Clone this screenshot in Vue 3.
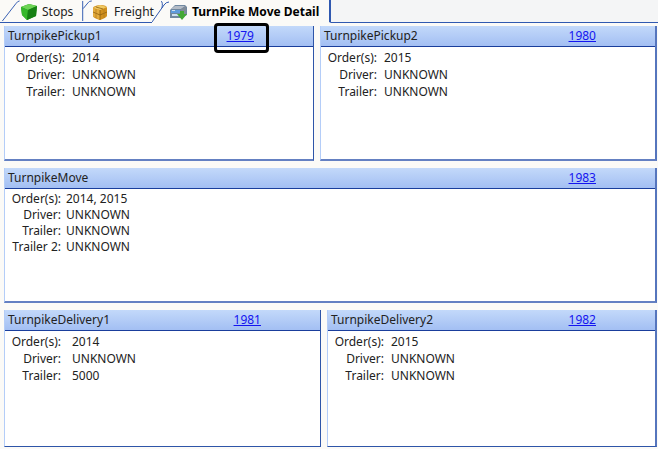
<script setup>
const rows = [
  {
    kind: 'pickup',
    panels: [
      { title: 'TurnpikePickup1', move: '1979', marked: true, fields: [['Order(s):', '2014'], ['Driver:', 'UNKNOWN'], ['Trailer:', 'UNKNOWN']] },
      { title: 'TurnpikePickup2', move: '1980', fields: [['Order(s):', '2015'], ['Driver:', 'UNKNOWN'], ['Trailer:', 'UNKNOWN']] },
    ],
  },
  {
    kind: 'move',
    panels: [
      { title: 'TurnpikeMove', move: '1983', fields: [['Order(s):', '2014, 2015'], ['Driver:', 'UNKNOWN'], ['Trailer:', 'UNKNOWN'], ['Trailer 2:', 'UNKNOWN']] },
    ],
  },
  {
    kind: 'delivery',
    panels: [
      { title: 'TurnpikeDelivery1', move: '1981', fields: [['Order(s):', '2014'], ['Driver:', 'UNKNOWN'], ['Trailer:', '5000']] },
      { title: 'TurnpikeDelivery2', move: '1982', fields: [['Order(s):', '2015'], ['Driver:', 'UNKNOWN'], ['Trailer:', 'UNKNOWN']] },
    ],
  },
]
</script>

<template>
  <main class="page">
    <nav class="tabs" role="tablist">
      <svg class="slope first" viewBox="0 0 20 23" aria-hidden="true">
        <path class="edge" d="M2 22 L16 4 Q18 1 20 1" />
      </svg>
      <button class="tab stops" role="tab" aria-selected="false">
        <svg class="icon" viewBox="0 0 18 18" aria-hidden="true">
          <path d="M1 4 L9 1 L17 3 L16 13 L7 17 L2 12 Z" fill="#1f9a1c" />
          <path d="M1 4 L9 1 L17 3 L8 7 Z" fill="#6ed455" />
          <path d="M1 4 L8 7 L7 17 L2 12 Z" fill="#36b82b" />
          <path d="M8 7 L17 3 L16 13 L7 17 Z" fill="#168013" />
        </svg>
        <span>Stops</span>
      </button>
      <svg class="slope" viewBox="0 0 10 23" aria-hidden="true">
        <path class="edge" d="M0.5 22 V1 M1 9 L6 3 Q7 1 10 1" />
      </svg>
      <button class="tab freight" role="tab" aria-selected="false">
        <svg class="icon small" viewBox="0 0 16 16" aria-hidden="true">
          <path d="M1 4 Q1 2 8 1 Q15 1 15 4 V12 Q14 14 8 16 Q1 14 1 12 Z" fill="#d0901f" />
          <path d="M1 4 L8 1 L15 3 L8 6 Z" fill="#f0c962" />
          <path d="M1 4 L8 6 V16 L1 12 Z" fill="#e3ab3c" />
          <path d="M1 8 L8 11 L15 8 M8 6 V16 M4 3 L11 5" stroke="#8d6010" stroke-width="0.8" fill="none" />
          <path d="M4 5 V14 M12 5 V14" stroke="#b57d1c" stroke-width="0.8" fill="none" />
        </svg>
        <span>Freight</span>
      </button>
      <svg class="slope last" viewBox="0 0 18 23" aria-hidden="true">
        <path class="edge" d="M0 22 L12 5 Q14 2 17 2 M9 1 Q11 2 10 8" />
      </svg>
      <button class="tab current" role="tab" aria-selected="true">
        <svg class="icon" viewBox="0 0 18 18" aria-hidden="true">
          <path d="M0 7 L5 2 H15 L17 4 V12 L11 15 H0 Z" fill="#7088a0" />
          <path d="M1 6 L5 3 H15 L11 6 Z" fill="#b4bcc6" />
          <path d="M1 7 H10 V10 H1 Z" fill="#5e9bdc" />
          <path d="M2 11 H9 V13 H2 Z M2 7 H5 V8 H2 Z" fill="#cfe0f0" />
          <path d="M11 6 L16 3 V12 L11 14 Z" fill="#808b98" />
          <path d="M10 8 H14 V11 H17 L12 17 L7 11 H10 Z" fill="#43a835" />
        </svg>
        <span>TurnPike Move Detail</span>
      </button>
      <div class="rest"></div>
    </nav>

    <div v-for="row in rows" :key="row.kind" class="row" :class="row.kind">
      <section v-for="panel in row.panels" :key="panel.title" class="panel">
        <header class="head">
          <h2>{{ panel.title }}</h2>
          <a :class="{ marked: panel.marked }" href="#">{{ panel.move }}</a>
        </header>
        <dl class="fields">
          <template v-for="[label, value] in panel.fields" :key="label">
            <dt>{{ label }}</dt>
            <dd>{{ value }}</dd>
          </template>
        </dl>
      </section>
    </div>
  </main>
</template>

<style>
body {
  margin: 0;
  background: #fbfaf7;
}
</style>

<style scoped>
.page {
  box-sizing: border-box;
  min-height: 100vh;
  padding-bottom: 2px;
  display: grid;
  grid-template-rows: auto 135fr 135fr 137fr;
  row-gap: 7px;
  color: #222;
  font: 12px/16px "Noto Sans", "DejaVu Sans", sans-serif;
}
.tabs {
  display: flex;
  height: 23px;
  margin-bottom: -4px;
}
.tab {
  display: flex;
  align-items: center;
  gap: 4px;
  padding: 1px 0 0;
  border: 0;
  border-bottom: 1px solid #3059b0;
  background: #fbfaf7;
  color: inherit;
  font: inherit;
  white-space: nowrap;
}
.stops { width: 62px; }
.freight {
  width: 60px;
  gap: 6px;
}
.current {
  padding-right: 10px;
  border-right: 2px solid #3059b0;
  border-bottom-color: transparent;
  font-weight: bold;
  color: #000;
}
.icon { width: 18px; height: 18px; flex: none; }
.icon.small { width: 16px; height: 16px; }
.slope {
  width: 10px;
  flex: none;
  box-sizing: border-box;
  height: 23px;
}
.slope.first { width: 20px; }
.slope.last { width: 18px; }
.slope:not(.last) { border-bottom: 1px solid #3059b0; }
.edge { fill: none; stroke: #3059b0; stroke-width: 1; }
.rest {
  flex: 1;
  background: #f4f5f6;
  border-bottom: 1px solid #3059b0;
}
.row {
  display: grid;
  gap: 6px;
  margin: 0 1px 0 4px;
}
.pickup { grid-template-columns: 310fr 337fr; }
.delivery { grid-template-columns: 317fr 330fr; }
.panel {
  background: #fff;
  border: solid;
  border-width: 0 1px 1px;
  border-color: #2e55a8 #2e55a8 #2e55a8 #b4cdf8;
}
.pickup .panel,
.move .panel {
  border-bottom: 2px solid #6480c2;
}
.panel:last-child {
  border-right: 2px solid #5575bd;
}
.head {
  display: flex;
  align-items: center;
  justify-content: space-between;
  height: 20px;
  padding: 0 59px 0 3px;
  background: linear-gradient(#c3d9fa, #a3bff3);
  border-bottom: 1px solid #1a3e9c;
}
h2 {
  margin: 0;
  font: inherit;
}
a {
  position: relative;
  color: #1414f0;
}
.marked::after {
  content: "";
  position: absolute;
  inset: -5px -15px -9px -13px;
  border: 3px solid #000;
  border-radius: 4px;
}
.fields {
  display: grid;
  grid-template-columns: 53px auto;
  justify-content: start;
  column-gap: 7px;
  margin: 0;
  padding: 2px 3px;
  line-height: 17px;
}
.pickup .panel:first-child .fields { grid-template-columns: 57px auto; }
.delivery .panel:first-child .fields { column-gap: 11px; }
.move .fields {
  column-gap: 5px;
  line-height: 16px;
}
dt { text-align: right; }
dd { margin: 0; }
</style>
